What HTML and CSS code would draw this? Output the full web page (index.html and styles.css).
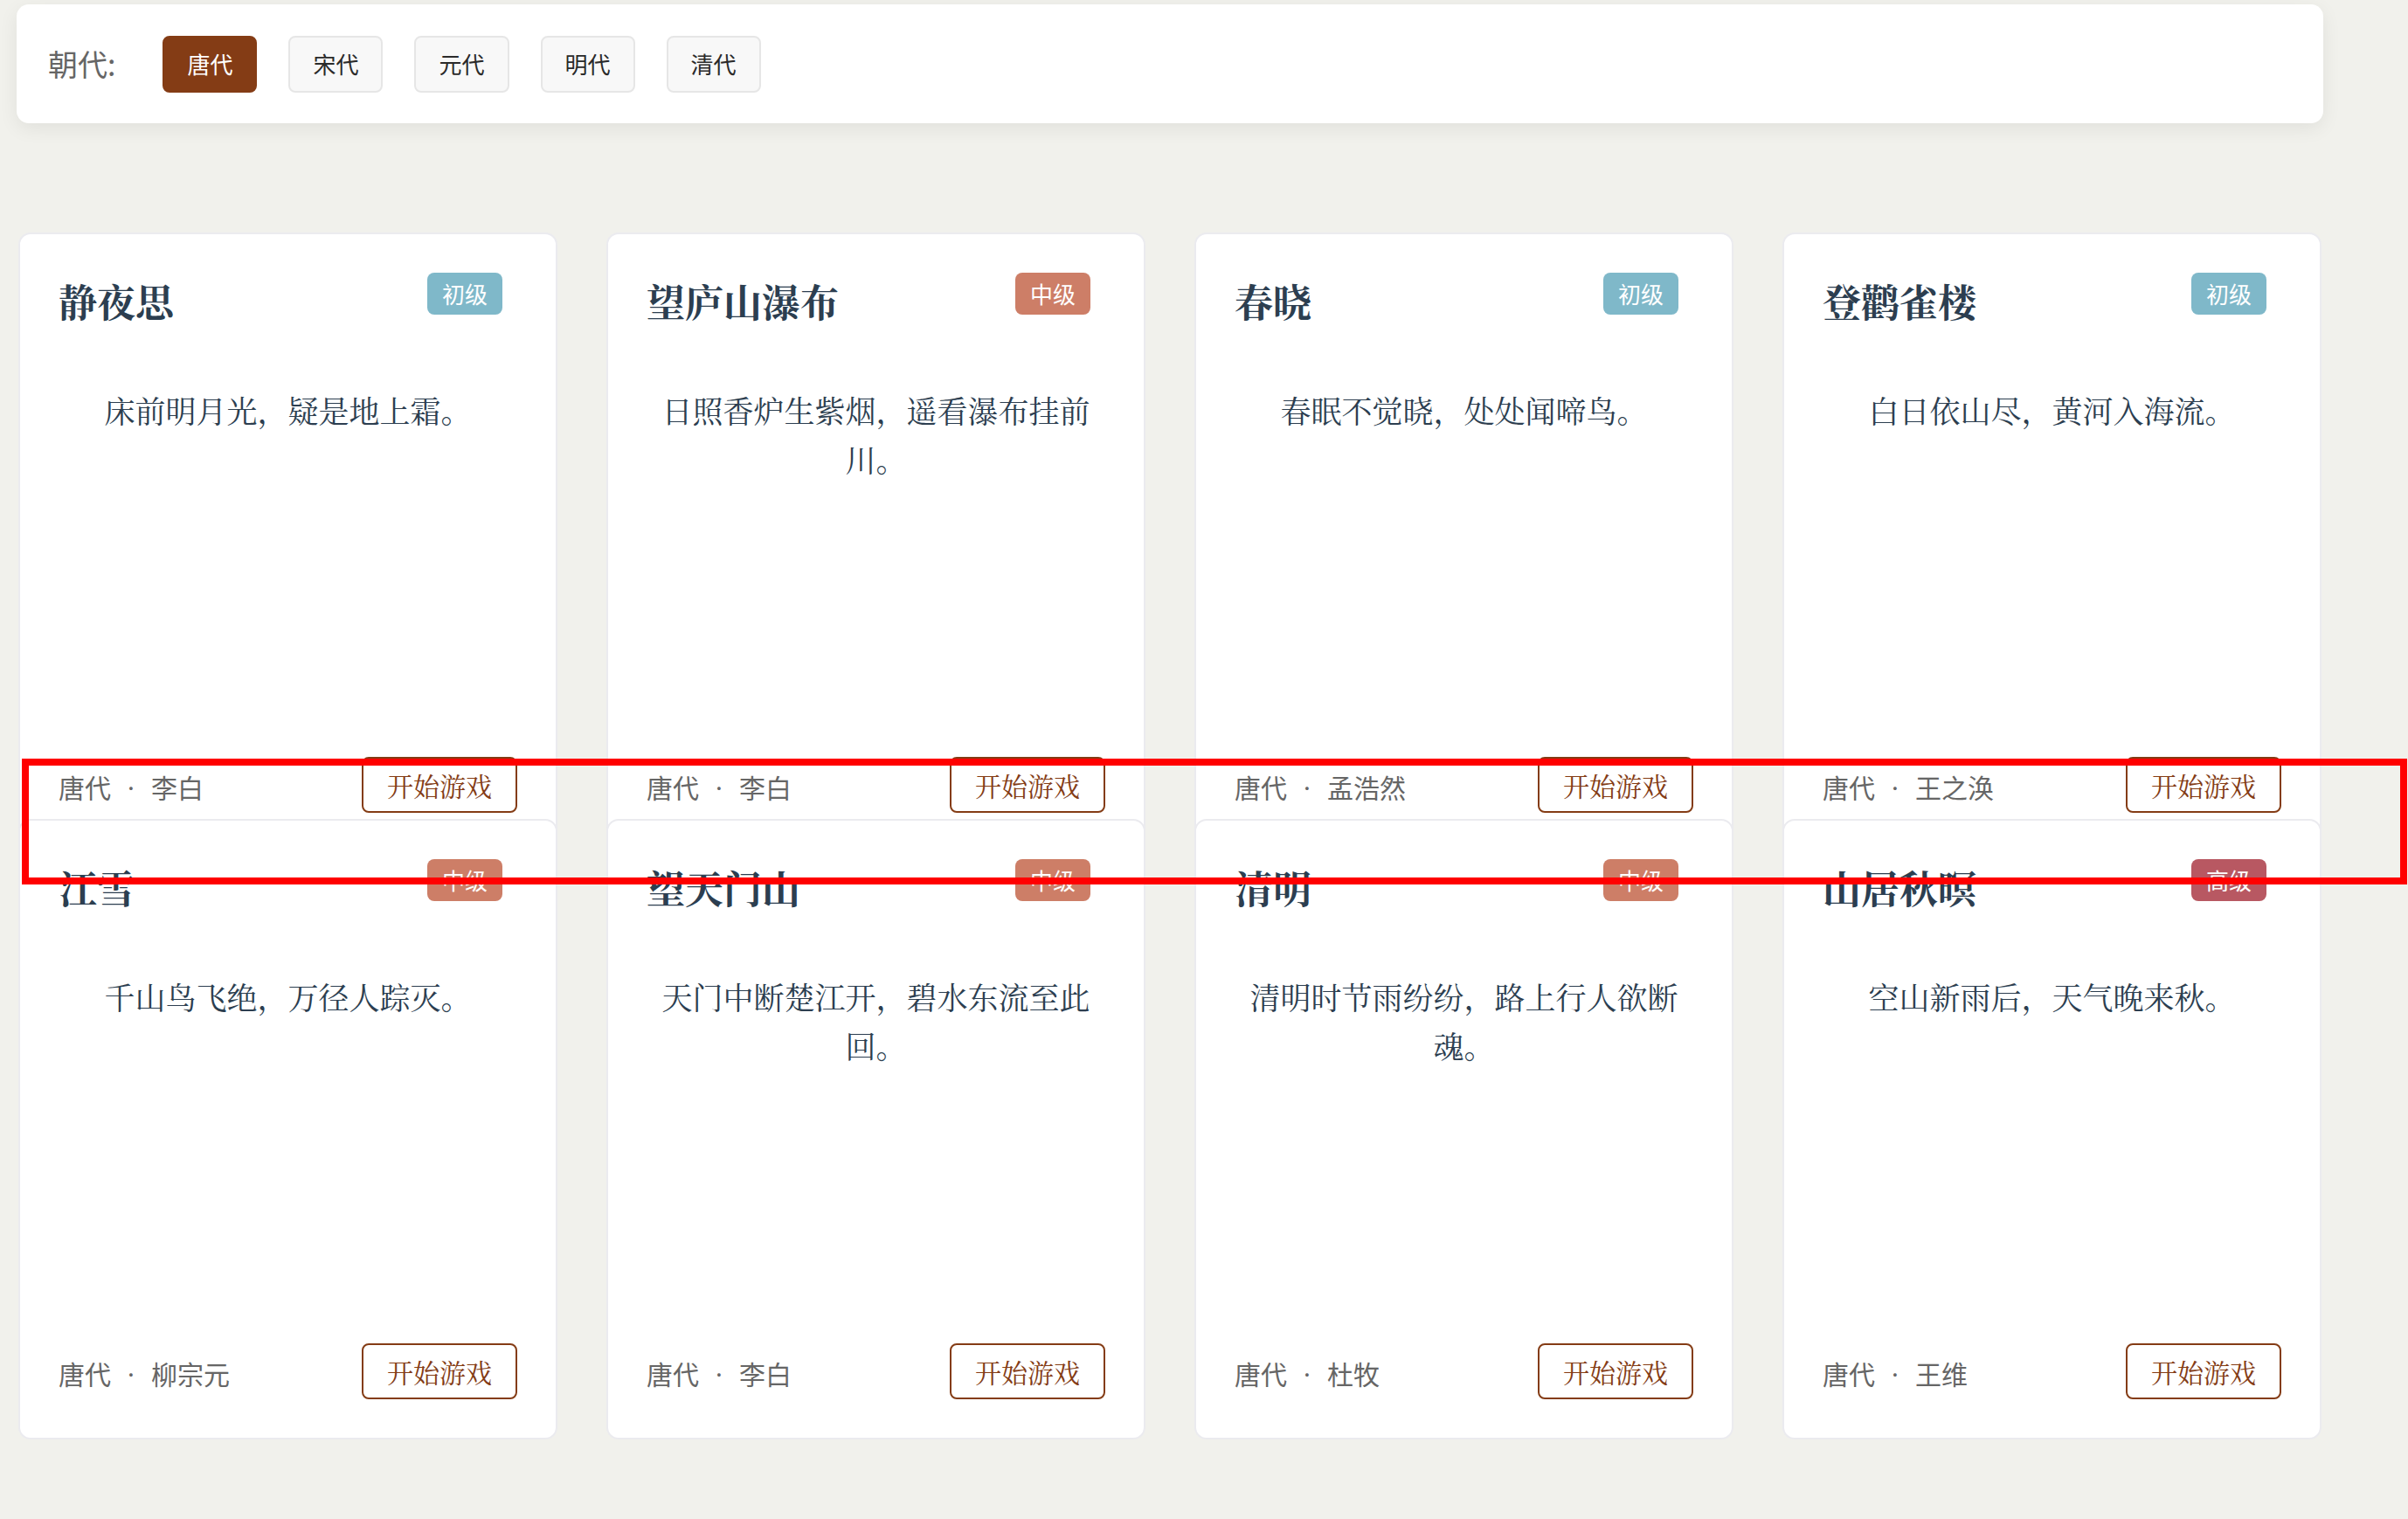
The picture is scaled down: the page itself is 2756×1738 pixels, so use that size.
FILE: index.html
```html
<!DOCTYPE html>
<html lang="zh-CN">
<head>
<meta charset="utf-8">
<title>古诗游戏</title>
<link rel="stylesheet" href="styles.css">
</head>
<body>
<div class="page">
  <div class="filter-bar">
    <span class="filter-label">朝代:</span>
    <button class="dyn-btn active">唐代</button>
    <button class="dyn-btn">宋代</button>
    <button class="dyn-btn">元代</button>
    <button class="dyn-btn">明代</button>
    <button class="dyn-btn">清代</button>
  </div>

  <div class="grid">
    <div class="card">
      <div class="card-head"><h3 class="title">静夜思</h3><span class="badge easy">初级</span></div>
      <p class="poem">床前明月光，疑是地上霜。</p>
      <div class="card-foot"><span class="meta">唐代<span class="sep">·</span>李白</span><button class="play">开始游戏</button></div>
    </div>
    <div class="card">
      <div class="card-head"><h3 class="title">望庐山瀑布</h3><span class="badge mid">中级</span></div>
      <p class="poem">日照香炉生紫烟，遥看瀑布挂前川。</p>
      <div class="card-foot"><span class="meta">唐代<span class="sep">·</span>李白</span><button class="play">开始游戏</button></div>
    </div>
    <div class="card">
      <div class="card-head"><h3 class="title">春晓</h3><span class="badge easy">初级</span></div>
      <p class="poem">春眠不觉晓，处处闻啼鸟。</p>
      <div class="card-foot"><span class="meta">唐代<span class="sep">·</span>孟浩然</span><button class="play">开始游戏</button></div>
    </div>
    <div class="card">
      <div class="card-head"><h3 class="title">登鹳雀楼</h3><span class="badge easy">初级</span></div>
      <p class="poem">白日依山尽，黄河入海流。</p>
      <div class="card-foot"><span class="meta">唐代<span class="sep">·</span>王之涣</span><button class="play">开始游戏</button></div>
    </div>
    <div class="card">
      <div class="card-head"><h3 class="title">江雪</h3><span class="badge mid">中级</span></div>
      <p class="poem">千山鸟飞绝，万径人踪灭。</p>
      <div class="card-foot"><span class="meta">唐代<span class="sep">·</span>柳宗元</span><button class="play">开始游戏</button></div>
    </div>
    <div class="card">
      <div class="card-head"><h3 class="title">望天门山</h3><span class="badge mid">中级</span></div>
      <p class="poem">天门中断楚江开，碧水东流至此回。</p>
      <div class="card-foot"><span class="meta">唐代<span class="sep">·</span>李白</span><button class="play">开始游戏</button></div>
    </div>
    <div class="card">
      <div class="card-head"><h3 class="title">清明</h3><span class="badge mid">中级</span></div>
      <p class="poem">清明时节雨纷纷，路上行人欲断魂。</p>
      <div class="card-foot"><span class="meta">唐代<span class="sep">·</span>杜牧</span><button class="play">开始游戏</button></div>
    </div>
    <div class="card">
      <div class="card-head"><h3 class="title">山居秋暝</h3><span class="badge hard">高级</span></div>
      <p class="poem">空山新雨后，天气晚来秋。</p>
      <div class="card-foot"><span class="meta">唐代<span class="sep">·</span>王维</span><button class="play">开始游戏</button></div>
    </div>
  </div>
</div>
<div class="highlight"></div>
</body>
</html>
```

FILE: styles.css
```css
* { box-sizing: border-box; }

html, body {
  margin: 0;
  padding: 0;
}

body {
  background: #f1f1ec;
  font-family: "Noto Sans CJK SC", "Noto Sans", sans-serif;
  position: relative;
  min-height: 1738px;
}

.page {
  width: 2640px;
  margin-left: 19px;
  padding-top: 5px;
}

.filter-bar {
  background: #ffffff;
  border-radius: 14px;
  box-shadow: 0 6px 22px rgba(0, 0, 0, 0.07);
  display: flex;
  align-items: center;
  gap: 36px;
  padding: 36px 36px;
  height: 136px;
}

.filter-label {
  font-size: 34px;
  color: #666666;
  margin-right: 18px;
  line-height: 1;
}

.dyn-btn {
  font-family: "Noto Sans CJK SC", sans-serif;
  font-size: 26px;
  height: 65px;
  padding: 0 26px;
  border: 2px solid #e6e6e6;
  background: #f8f8f8;
  color: #2a2a2a;
  border-radius: 8px;
  line-height: 1;
}

.dyn-btn.active {
  background: #843c15;
  border-color: #843c15;
  color: #ffffff;
}

.grid {
  margin-top: 125px;
  padding: 0 2px;
  display: grid;
  grid-template-columns: repeat(4, 1fr);
  grid-auto-rows: 615px;
  gap: 56px;
}

.card {
  background: #ffffff;
  border: 2px solid #ebebef;
  border-radius: 14px;
  height: 710px;
  padding: 44px;
  display: flex;
  flex-direction: column;
}

.card-head {
  display: flex;
  justify-content: space-between;
  align-items: flex-start;
}

.title {
  margin: 0;
  font-family: "Noto Serif CJK SC", "Source Han Serif SC", "AR PL UMing CN", "Noto Sans CJK SC", serif;
  font-size: 44px;
  line-height: 64px;
  font-weight: 700;
  color: #2c3e50;
}

.badge {
  margin-right: 17px;
  height: 48px;
  line-height: 48px;
  padding: 0 17px;
  border-radius: 8px;
  font-size: 26px;
  color: #ffffff;
}

.badge.easy { background: #7fb8c9; }
.badge.mid { background: #cd7e67; }
.badge.hard { background: #b85862; }

.poem {
  margin: 65px 0 0;
  padding: 0 10px;
  text-align: center;
  font-family: "Noto Serif CJK SC", "Source Han Serif SC", "AR PL UMing CN", "Noto Sans CJK SC", serif;
  font-size: 35px;
  line-height: 56px;
  color: #2c3e50;
}

.card-foot {
  margin-top: auto;
  display: flex;
  justify-content: space-between;
  align-items: center;
}

.meta {
  font-size: 30px;
  color: #666666;
  padding-top: 3px;
}

.sep {
  display: inline-block;
  width: 46px;
  text-align: center;
  font-family: "Noto Serif CJK SC", "Liberation Serif", serif;
}

.play {
  font-family: "Noto Serif CJK SC", "Source Han Serif SC", "AR PL UMing CN", "Noto Sans CJK SC", serif;
  font-size: 30px;
  height: 64px;
  padding: 0 27px;
  border: 2px solid #843c15;
  background: #ffffff;
  color: #843c15;
  border-radius: 8px;
  line-height: 1;
}

.highlight {
  position: absolute;
  left: 25px;
  top: 868px;
  width: 2730px;
  height: 144px;
  border: 8px solid #ff0000;
  z-index: 10;
  pointer-events: none;
}
```
